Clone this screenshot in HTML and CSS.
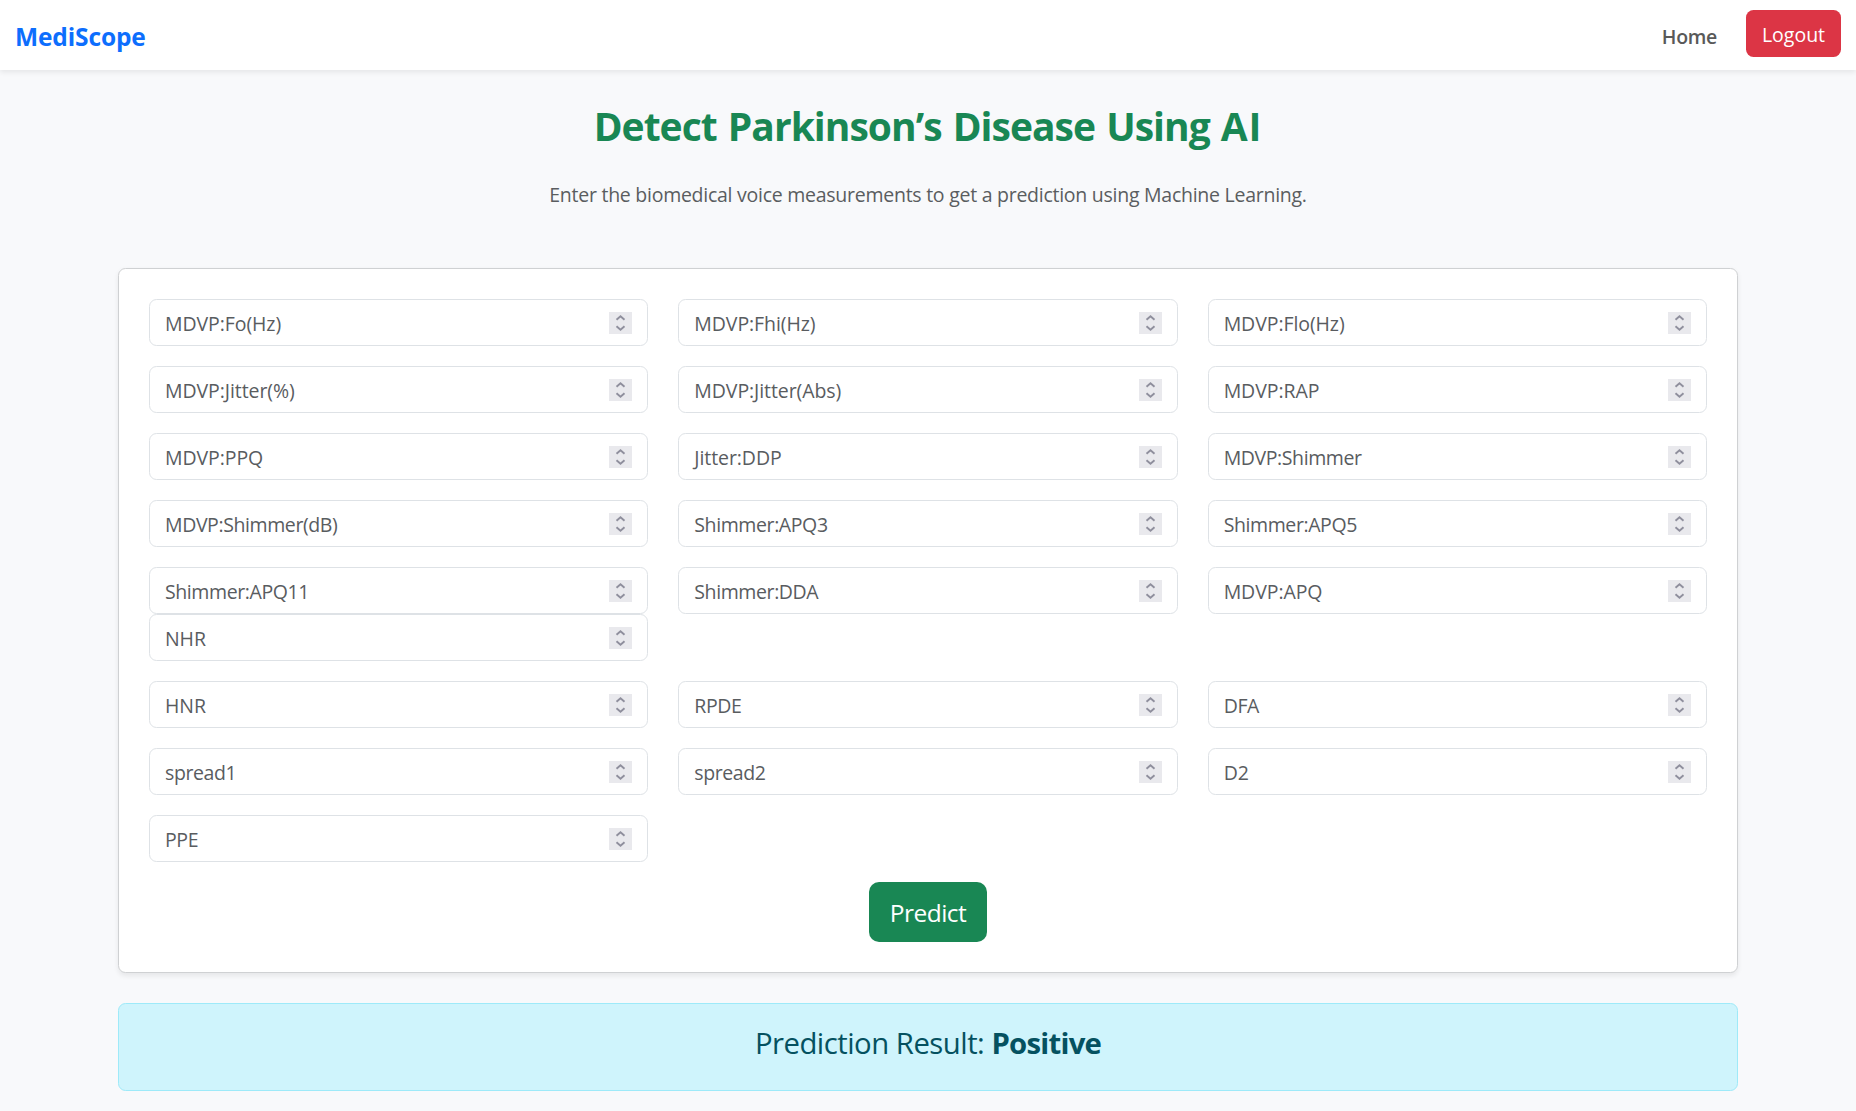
FILE: index.html
```
<!DOCTYPE html>
<html lang="en">
<head>
<meta charset="utf-8">
<title>MediScope</title>
<link rel="stylesheet" href="styles.css">
</head>
<body>
<svg width="0" height="0" class="defs" aria-hidden="true">
  <symbol id="spin" viewBox="0 0 23 22"><path d="M7.5 7.8 11.5 4.3 15.5 7.8M7.5 14.2 11.5 17.7 15.5 14.2" fill="none" stroke="#8f8f9d" stroke-width="1.9"/></symbol>
</svg>
<nav class="navbar">
  <a class="brand">MediScope</a>
  <div class="nav-links">
    <a class="nav-link">Home</a>
    <a class="logout">Logout</a>
  </div>
</nav>
<main class="container">
  <h1 class="title">Detect Parkinson’s Disease Using <span class="wide">AI</span></h1>
  <p class="subtitle">Enter the biomedical voice measurements to get a prediction using Machine Learning.</p>
  <form class="card">
    <div class="row">
      <div class="field"><span>MDVP:Fo(Hz)</span><svg class="spinner"><use href="#spin"/></svg></div>
      <div class="field"><span>MDVP:Fhi(Hz)</span><svg class="spinner"><use href="#spin"/></svg></div>
      <div class="field"><span>MDVP:Flo(Hz)</span><svg class="spinner"><use href="#spin"/></svg></div>
    </div>
    <div class="row">
      <div class="field"><span>MDVP:Jitter(%)</span><svg class="spinner"><use href="#spin"/></svg></div>
      <div class="field"><span>MDVP:Jitter(Abs)</span><svg class="spinner"><use href="#spin"/></svg></div>
      <div class="field"><span>MDVP:RAP</span><svg class="spinner"><use href="#spin"/></svg></div>
    </div>
    <div class="row">
      <div class="field"><span>MDVP:PPQ</span><svg class="spinner"><use href="#spin"/></svg></div>
      <div class="field"><span>Jitter:DDP</span><svg class="spinner"><use href="#spin"/></svg></div>
      <div class="field"><span class="tight">MDVP:Shimmer</span><svg class="spinner"><use href="#spin"/></svg></div>
    </div>
    <div class="row">
      <div class="field"><span class="tight">MDVP:Shimmer(dB)</span><svg class="spinner"><use href="#spin"/></svg></div>
      <div class="field"><span class="tight">Shimmer:APQ3</span><svg class="spinner"><use href="#spin"/></svg></div>
      <div class="field"><span class="tight">Shimmer:APQ5</span><svg class="spinner"><use href="#spin"/></svg></div>
    </div>
    <div class="row">
      <div class="stack">
        <div class="field"><span class="tight">Shimmer:APQ11</span><svg class="spinner"><use href="#spin"/></svg></div>
        <div class="field"><span>NHR</span><svg class="spinner"><use href="#spin"/></svg></div>
      </div>
      <div class="field"><span class="tight">Shimmer:DDA</span><svg class="spinner"><use href="#spin"/></svg></div>
      <div class="field"><span>MDVP:APQ</span><svg class="spinner"><use href="#spin"/></svg></div>
    </div>
    <div class="row">
      <div class="field"><span>HNR</span><svg class="spinner"><use href="#spin"/></svg></div>
      <div class="field"><span class="tight">RPDE</span><svg class="spinner"><use href="#spin"/></svg></div>
      <div class="field"><span class="tight">DFA</span><svg class="spinner"><use href="#spin"/></svg></div>
    </div>
    <div class="row">
      <div class="field"><span class="tight">spread1</span><svg class="spinner"><use href="#spin"/></svg></div>
      <div class="field"><span class="tight">spread2</span><svg class="spinner"><use href="#spin"/></svg></div>
      <div class="field"><span>D2</span><svg class="spinner"><use href="#spin"/></svg></div>
    </div>
    <div class="row">
      <div class="field"><span class="tight">PPE</span><svg class="spinner"><use href="#spin"/></svg></div>
    </div>
    <button type="button" class="predict">Predict</button>
  </form>
  <div class="alert">Prediction Result: <strong>Positive</strong></div>
</main>
</body>
</html>
```
FILE: styles.css
```
* { box-sizing: border-box; }
body {
  margin: 0;
  min-height: 1111px;
  background: #f8f9fb;
  color: #212529;
  font: 19.5px/30px "Open Sans", "Noto Sans", sans-serif;
}
.defs { display: block; }
.navbar {
  display: flex;
  align-items: flex-start;
  justify-content: space-between;
  height: 70px;
  padding: 10px 15px;
  background: #fff;
  box-shadow: 0 2.5px 5px rgba(0, 0, 0, .075);
}
.brand {
  padding-top: 9px;
  color: #0d6efd;
  font-size: 24.5px;
  font-weight: 700;
  line-height: 36px;
  letter-spacing: -.12px;
}
.nav-links { display: flex; gap: 29px; }
.nav-link {
  padding-top: 12px;
  color: #595959;
  font-weight: 600;
  letter-spacing: -.3px;
}
.logout {
  width: 95px;
  height: 47px;
  padding-top: 10px;
  border-radius: 7.5px;
  background: #dc3545;
  color: #fff;
  text-align: center;
}
.container { width: 1620px; margin: 0 auto; padding-top: 32px; }
.title {
  margin: 0;
  color: #198754;
  font-size: 39px;
  line-height: 48px;
  letter-spacing: -.98px;
  word-spacing: 2px;
  text-align: center;
}
.title .wide { letter-spacing: .8px; }
.subtitle {
  margin: 30px 0 58px;
  color: #5a5d60;
  letter-spacing: -.26px;
  text-align: center;
}
.card {
  display: flex;
  flex-direction: column;
  gap: 20px;
  height: 705px;
  padding: 30px;
  border: 1px solid #cfd1d3;
  border-radius: 7.5px;
  background: #fff;
  box-shadow: 0 2.5px 5px rgba(0, 0, 0, .075);
}
.row {
  display: grid;
  grid-template-columns: repeat(3, 1fr);
  align-items: start;
  gap: 30px;
}
.field {
  display: flex;
  align-items: center;
  justify-content: space-between;
  height: 47px;
  padding: 0 15px;
  border: 1px solid #dee2e6;
  border-radius: 7.5px;
  background: #fff;
  color: #595c5f;
  letter-spacing: -.08px;
}
.field span { padding-top: 2px; }
.field .tight { letter-spacing: -.4px; }
.spinner {
  width: 23px;
  height: 22px;
  background: #e9e9ed;
}
.predict {
  align-self: center;
  width: 118px;
  height: 60px;
  padding: 2px 0 0;
  border: 0;
  border-radius: 10px;
  background: #198754;
  color: #fff;
  font: 24.5px/58px "Open Sans", "Noto Sans", sans-serif;
  letter-spacing: -.5px;
}
.alert {
  height: 88px;
  margin-top: 30px;
  padding: 21px 20px 0;
  border: 1px solid #9eeaf9;
  border-radius: 7.5px;
  background: #cff4fc;
  color: #055160;
  font-size: 29.3px;
  line-height: 36px;
  letter-spacing: -.5px;
  text-align: center;
}
.alert strong { letter-spacing: -.75px; }
```
